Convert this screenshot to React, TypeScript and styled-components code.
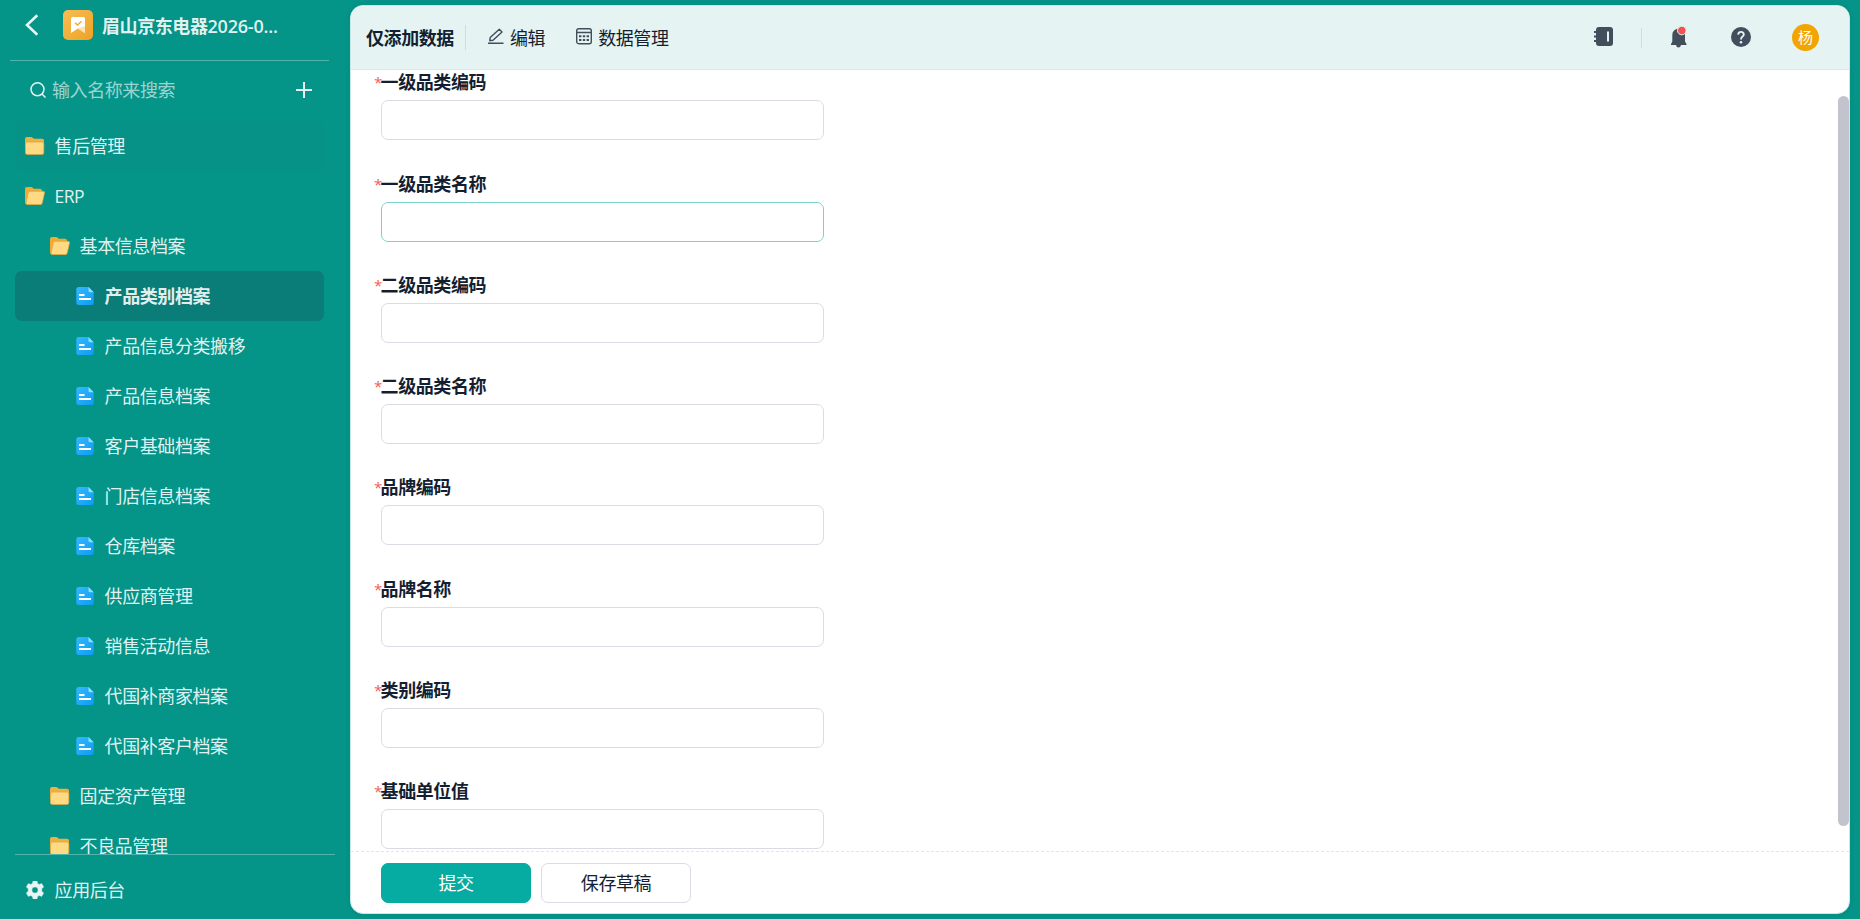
import React from 'react';
import styled, { createGlobalStyle } from 'styled-components';

const Global = createGlobalStyle`
  *, *::before, *::after { box-sizing: border-box; }
  html, body, #root { height: 100%; }
  body {
    margin: 0;
    overflow: hidden;
    background: #059488;
    font-family: 'Open Sans', 'Noto Sans CJK SC', sans-serif;
    font-size: 18px;
    letter-spacing: -0.42px;
    line-height: 26px;
    color: #141e31;
  }
  svg { display: block; flex: none; }
`;

const Shell = styled.div`
  display: flex;
  height: 919px;
  padding: 5px 10px 5px 0;
`;

const Sidebar = styled.aside`
  width: 350px;
  flex: none;
  display: flex;
  flex-direction: column;
  color: rgba(255, 255, 255, 0.9);
`;

const AppHeader = styled.div`
  display: flex;
  align-items: center;
  height: 56px;
  margin: 0 21px 0 10px;
  padding: 0 0 15px 15px;
  border-bottom: 1px solid rgba(255, 255, 255, 0.3);
`;

const AppBadge = styled.span`
  display: flex;
  margin: 0 9px 0 24px;
`;

const AppName = styled.span`
  font-weight: 700;
  white-space: nowrap;
  padding-top: 2px;
`;

const Digits = styled.span`
  font-weight: 600;
  letter-spacing: -0.2px;
`;

const SearchBar = styled.div`
  display: flex;
  align-items: center;
  height: 60px;
  padding: 0 38px 2px 30px;
`;

const Placeholder = styled.span`
  flex: 1;
  padding-left: 6px;
  color: rgba(255, 255, 255, 0.62);
`;

const Tree = styled.nav`
  flex: 1;
  min-height: 0;
  overflow: hidden;
  margin: 0 15px;
`;

const TreeRow = styled.div<{ $level: number; $active?: boolean; $hover?: boolean }>`
  display: flex;
  align-items: center;
  width: 309px;
  height: 50px;
  padding-left: ${(p) => 10 + p.$level * 25}px;
  border-radius: 7px;
  font-weight: ${(p) => (p.$active ? 700 : 400)};
  background: ${(p) => (p.$active ? '#0a7d79' : p.$hover ? '#069287' : 'transparent')};
`;

const RowIcon = styled.span`
  display: flex;
  width: 29.6px;
`;

const Latin = styled.span`
  font-size: 17.5px;
  letter-spacing: -0.6px;
`;

const SidebarFooter = styled.div`
  display: flex;
  align-items: center;
  height: 60px;
  margin: 0 15px;
  padding: 10px 0 0 10px;
  border-top: 1px solid rgba(255, 255, 255, 0.3);
`;

const Panel = styled.main`
  flex: 1;
  display: flex;
  flex-direction: column;
  background: #fff;
  border: 1px solid #c9e9e6;
  border-radius: 13px;
  overflow: hidden;
  box-shadow: 0 0 6px rgba(0, 0, 0, 0.06);
`;

const Toolbar = styled.header`
  display: flex;
  align-items: center;
  height: 64px;
  flex: none;
  padding: 0 30px 0 15px;
  background: #e5f3f2;
  border-bottom: 1px solid #dfe6e8;
`;

const Title = styled.span`
  width: 88px;
  white-space: nowrap;
  font-weight: 700;
`;

const Divider = styled.i<{ $height: number; $left: number; $right: number }>`
  width: 1px;
  height: ${(p) => p.$height}px;
  margin: 0 ${(p) => p.$right}px 0 ${(p) => p.$left}px;
  background: #d0dcde;
`;

const Action = styled.span`
  display: flex;
  align-items: center;
  gap: 6px;
  margin-right: 31px;
  svg { margin-top: -3px; }
`;

const Tools = styled.div`
  display: flex;
  align-items: center;
  margin-left: auto;
`;

const Tool = styled.span<{ $right: number }>`
  display: flex;
  margin-right: ${(p) => p.$right}px;
  padding-bottom: 2px;
`;

const Avatar = styled.span`
  width: 27px;
  height: 27px;
  border-radius: 50%;
  background: #f0a500;
  color: #fff;
  font-size: 15px;
  letter-spacing: 0;
  line-height: 26px;
  text-align: center;
`;

const Body = styled.div`
  flex: 1;
  min-height: 0;
  display: flex;
  justify-content: space-between;
  overflow: hidden;
`;

const Form = styled.form`
  padding: 0.25px 0 0 23px;
`;

const Field = styled.div`
  height: 101.3px;
`;

const Label = styled.label`
  display: flex;
  height: 30px;
  line-height: 25px;
  font-weight: 700;
`;

const Star = styled.span`
  width: 6.6px;
  color: #f45b5b;
  font-weight: 400;
  font-size: 15px;
  line-height: 24px;
`;

const Input = styled.input<{ $focus?: boolean }>`
  display: block;
  width: 443px;
  height: 40px;
  margin-left: 7px;
  padding: 0 12px;
  border: 1px solid ${(p) => (p.$focus ? '#77d3cb' : '#d9dce5')};
  border-radius: 7px;
  outline: none;
  font: inherit;
`;

const ScrollThumb = styled.div`
  width: 11px;
  height: 730px;
  margin-top: 26px;
  border-radius: 6px;
  background: #c1c4cc;
`;

const Footer = styled.footer`
  display: flex;
  gap: 10px;
  height: 62px;
  flex: none;
  padding: 12px 30px 0;
  background: repeating-linear-gradient(90deg, #e3e5e8 0 3px, transparent 3px 5px) 0 0 / 100% 1px no-repeat;
`;

const Button = styled.button<{ $primary?: boolean }>`
  width: 150px;
  height: 40px;
  padding: 0;
  border: 1px solid ${(p) => (p.$primary ? '#06aca1' : '#d9dce5')};
  border-radius: 7px;
  background: ${(p) => (p.$primary ? '#06aca1' : '#fff')};
  color: ${(p) => (p.$primary ? '#fff' : '#141e31')};
  font: inherit;
  letter-spacing: inherit;
`;

const FolderIcon = () => (
  <svg width="20" height="18" viewBox="0 0 20 18">
    <path d="M0 2Q0 0 2 0H6.5L9 1.8H17Q19 1.8 19 3.8V12H0Z" fill="#efb043" />
    <rect x="0.4" y="5" width="18.4" height="12.6" rx="2" fill="#ffda85" stroke="#dfa63c" strokeWidth="0.8" />
  </svg>
);

const FolderOpenIcon = () => (
  <svg width="20" height="18" viewBox="0 0 20 18">
    <path d="M0 2Q0 0 2 0H6.5L9 1.8H15Q17 1.8 17 3.8V17.5H2Q0 17.5 0 15.5Z" fill="#efaa38" />
    <path d="M5 4.3H18Q20 4.3 19.5 6L17.3 15.8Q16.9 17.5 15.2 17.5H2.2Q.8 17.5 1.2 15.8L3.2 5.8Q3.5 4.3 5 4.3Z" fill="#ffda85" stroke="#dfa63c" strokeWidth="0.7" />
  </svg>
);

const DocIcon = () => (
  <svg width="18" height="18" viewBox="0 0 18 18">
    <defs>
      <linearGradient id="doc" x1="0" y1="0" x2="1" y2="1">
        <stop offset="0" stopColor="#35b8ff" />
        <stop offset="1" stopColor="#0c9cf3" />
      </linearGradient>
    </defs>
    <path d="M0.3 2.5Q.3 0 2.8 0H12.5L17.7 5.2V15.5Q17.7 18 15.2 18H2.8Q.3 18 .3 15.5Z" fill="url(#doc)" />
    <path d="M12.5 0L17.7 5.2H14Q12.5 5.2 12.5 3.7Z" fill="#8fdcff" />
    <path d="M3 8H8.5M3 12H15" stroke="#fff" strokeWidth="2" />
  </svg>
);

const GearIcon = () => (
  <svg width="18" height="18" viewBox="3 3 18 18">
    <path
      fill="#e6f4f3"
      fillRule="evenodd"
      d="M10 3h4l.6 2.5 1.6.9 2.5-.8 2 3.400-1.900 1.800v2.400l1.900 1.800-2 3.400-2.500-.8-1.600.9L14 21h-4l-.6-2.500-1.600-.9-2.500.8-2-3.400 1.900-1.800v-2.400L3.300 9l2-3.400 2.500.8 1.600-.9ZM12 8.900a3.100 3.100 0 1 0 0 6.200 3.100 3.100 0 0 0 0-6.200Z"
      stroke="#e6f4f3"
      strokeWidth="0.4"
    />
  </svg>
);

const Inset = styled.span`
  padding-left: 1px;
`;

type Kind = 'folder' | 'open' | 'doc';
type Item = { text: string; level: number; kind: Kind; active?: boolean; hover?: boolean; latin?: boolean };

const items: Item[] = [
  { text: '售后管理', level: 0, kind: 'folder', hover: true },
  { text: 'ERP', level: 0, kind: 'open', latin: true },
  { text: '基本信息档案', level: 1, kind: 'open' },
  { text: '产品类别档案', level: 2, kind: 'doc', active: true },
  { text: '产品信息分类搬移', level: 2, kind: 'doc' },
  { text: '产品信息档案', level: 2, kind: 'doc' },
  { text: '客户基础档案', level: 2, kind: 'doc' },
  { text: '门店信息档案', level: 2, kind: 'doc' },
  { text: '仓库档案', level: 2, kind: 'doc' },
  { text: '供应商管理', level: 2, kind: 'doc' },
  { text: '销售活动信息', level: 2, kind: 'doc' },
  { text: '代国补商家档案', level: 2, kind: 'doc' },
  { text: '代国补客户档案', level: 2, kind: 'doc' },
  { text: '固定资产管理', level: 1, kind: 'folder' },
  { text: '不良品管理', level: 1, kind: 'folder' },
];

const fields = ['一级品类编码', '一级品类名称', '二级品类编码', '二级品类名称', '品牌编码', '品牌名称', '类别编码', '基础单位值'];

const icons: Record<Kind, () => React.JSX.Element> = {
  folder: FolderIcon,
  open: FolderOpenIcon,
  doc: () => (
    <Inset>
      <DocIcon />
    </Inset>
  ),
};

export default function App() {
  return (
    <>
      <Global />
      <Shell>
        <Sidebar>
          <AppHeader>
            <svg width="14" height="22" viewBox="0 0 14 22" fill="none" stroke="#e6f4f3" strokeWidth="2.6">
              <path d="M12.3 1.2L2 11L12.3 20.8" />
            </svg>
            <AppBadge>
              <svg width="30" height="30" viewBox="0 0 30 30">
                <defs>
                  <linearGradient id="badge" x1="0" y1="0" x2="1" y2="1">
                    <stop offset="0" stopColor="#f7bd55" />
                    <stop offset="1" stopColor="#eda323" />
                  </linearGradient>
                </defs>
                <rect width="30" height="30" rx="5" fill="url(#badge)" />
                <path d="M8 8.5Q8 7 9.5 7H20.5Q22 7 22 8.5V23L15 18.5L8 23Z" fill="#fff" />
                <path d="M8 23L15 18.5L22 23V16L15 18.5L8 23Z" fill="#fbe3b8" />
                <path d="M12 12.8L14.5 15L18.5 11.3" fill="none" stroke="#f0ab35" strokeWidth="1.5" />
              </svg>
            </AppBadge>
            <AppName>
              眉山京东电器<Digits>2026-0...</Digits>
            </AppName>
          </AppHeader>
          <SearchBar>
            <svg width="16" height="16" viewBox="0 0 16 16" fill="none" stroke="#e6f4f3" strokeWidth="1.5">
              <circle cx="7.5" cy="7.3" r="6.5" />
              <path d="M12 12L15.5 15.5" />
            </svg>
            <Placeholder>输入名称来搜索</Placeholder>
            <svg width="16" height="16" viewBox="0 0 16 16" stroke="#e6f4f3" strokeWidth="2">
              <path d="M8 0V16M0 8H16" />
            </svg>
          </SearchBar>
          <Tree>
            {items.map((it) => {
              const Icon = icons[it.kind];
              return (
                <TreeRow key={it.text} $level={it.level} $active={it.active} $hover={it.hover}>
                  <RowIcon>
                    <Icon />
                  </RowIcon>
                  {it.latin ? <Latin>{it.text}</Latin> : it.text}
                </TreeRow>
              );
            })}
          </Tree>
          <SidebarFooter>
            <RowIcon>
              <Inset>
                <GearIcon />
              </Inset>
            </RowIcon>
            应用后台
          </SidebarFooter>
        </Sidebar>
        <Panel>
          <Toolbar>
            <Title>仅添加数据</Title>
            <Divider $height={25} $left={11} $right={22} />
            <Action>
              <svg width="16" height="16" viewBox="0 0 16 16" fill="none" stroke="#434e5c" strokeWidth="1.4">
                <path d="M11.3 1.2L14 3.9L5 12.2L1.8 12.7L2.2 9.6Z" strokeLinejoin="round" />
                <path d="M0 15.2H15.5" />
              </svg>
              编辑
            </Action>
            <Action>
              <svg width="16" height="17" viewBox="0 0 16 17" fill="none" stroke="#434e5c" strokeWidth="1.4">
                <rect x=".7" y=".7" width="14.6" height="15" rx="2" />
                <path d="M.7 4.5H15.3" />
                <path d="M3 8.2H13M3 12H13" strokeWidth="2" strokeDasharray="2.4 1.4" />
              </svg>
              数据管理
            </Action>
            <Tools>
              <Tool $right={0}>
                <svg width="19" height="19" viewBox="0 0 19 19">
                  <rect x="2" width="17" height="19" rx="3" fill="#434e5c" />
                  <path d="M0 5H4M0 9.5H4M0 14H4" stroke="#434e5c" strokeWidth="1.8" />
                  <path d="M14 4.5V14.5" stroke="#e5f3f2" strokeWidth="2" />
                </svg>
              </Tool>
              <Divider $height={20} $left={28} $right={29} />
              <Tool $right={44}>
                <svg width="16" height="22" viewBox="0 0 16 22">
                  <path d="M7.5 2.5Q14 3 14 9V15.5L15.5 18V19H10Q9.5 21.5 7.5 21.5T5 19H0V18L1.3 15.5V9Q1.3 3.5 7.5 2.5Z" fill="#434e5c" />
                  <circle cx="10.8" cy="4.5" r="4.3" fill="#f45252" stroke="#e5f3f2" />
                </svg>
              </Tool>
              <Tool $right={41}>
                <svg width="20" height="20" viewBox="0 0 20 20">
                  <circle cx="10" cy="10" r="10" fill="#434e5c" />
                  <path d="M7.2 7.6Q7.3 4.9 10 4.9T12.8 7.5Q12.8 8.7 11.3 9.7Q10 10.6 10 12.4" fill="none" stroke="#e5f3f2" strokeWidth="1.9" />
                  <circle cx="10" cy="15.2" r="1.3" fill="#e5f3f2" />
                </svg>
              </Tool>
              <Avatar>杨</Avatar>
            </Tools>
          </Toolbar>
          <Body>
            <Form>
              {fields.map((name, i) => (
                <Field key={name}>
                  <Label>
                    <Star>*</Star>
                    {name}
                  </Label>
                  <Input $focus={i === 1} />
                </Field>
              ))}
            </Form>
            <ScrollThumb />
          </Body>
          <Footer>
            <Button $primary>提交</Button>
            <Button>保存草稿</Button>
          </Footer>
        </Panel>
      </Shell>
    </>
  );
}
